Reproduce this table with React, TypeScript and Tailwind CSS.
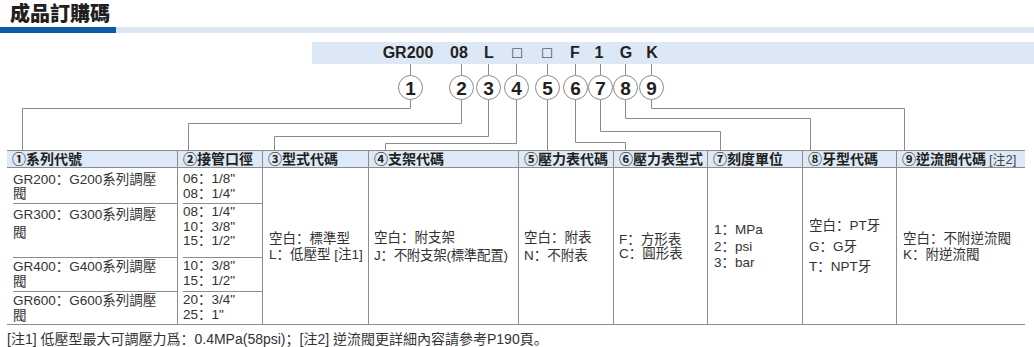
import React from "react";

const ticks = [410, 461, 488, 516, 547, 575, 600, 625, 651];

// connector lines, page coordinates (svg is shifted up by 33px)
const paths = [
  "M410.5 100 V108.5 H22.5 V150",
  "M461.5 100 V123.5 H188.5 V150",
  "M488.5 100 V136.5 H274.5 V150",
  "M516.5 100 V143.5 H385.5 V150",
  "M547.5 100 V150",
  "M575.5 100 V142.5 H625.5 V150",
  "M600.5 100 V131.5 H720.5 V150",
  "M625.5 100 V118.5 H810.5 V150",
  "M651.5 100 V108.5 H904.5 V150",
];

const codes: [string, number][] = [
  ["GR200", 408],
  ["08", 459],
  ["L", 489],
  ["□", 517],
  ["□", 547],
  ["F", 575],
  ["1", 599],
  ["G", 626],
  ["K", 652],
];

const heads = [
  "①系列代號",
  "②接管口徑",
  "③型式代碼",
  "④支架代碼",
  "⑤壓力表代碼",
  "⑥壓力表型式",
  "⑦刻度單位",
  "⑧牙型代碼",
];

// fullwidth punctuation sits low-left like the print, so take it from the SC face
function T({ s }: { s: string }) {
  const parts = s.split(/([：；。])/);
  return (
    <>
      {parts.map((p, i) =>
        /^[：；。]$/.test(p) ? (
          <span key={i} className="font-['Noto_Sans_CJK_SC',sans-serif]">
            {p}
          </span>
        ) : (
          <React.Fragment key={i}>{p}</React.Fragment>
        )
      )}
    </>
  );
}

function Diagram() {
  return (
    <div className="relative h-[117px] pt-[9px]">
      {/* code banner */}
      <div className="relative ml-[312px] h-[22px] bg-[#dce8f5]">
        {codes.map(([c, x], i) => (
          <span
            key={i}
            className="absolute top-0 -translate-x-1/2 text-[16px] font-bold leading-[22px] text-[#231f20]"
            style={{ left: x - 312 }}
          >
            {c}
          </span>
        ))}
      </div>
      <svg className="absolute left-0 top-0" width={1034} height={117}>
        <g transform="translate(0,-33)" stroke="#8a8a8a" strokeWidth={1} fill="none">
          {ticks.map((x) => (
            <path key={x} d={`M${x + 0.5} 64 V75.5`} />
          ))}
          {paths.map((d) => (
            <path key={d} d={d} />
          ))}
          {ticks.map((x, i) => (
            <g key={"c" + x}>
              <circle cx={x + 0.5} cy={87.5} r={12} fill="#fff" />
              <text
                x={x + 0.5}
                y={94.5}
                textAnchor="middle"
                fontSize={19}
                fontWeight={700}
                fill="#231f20"
                stroke="none"
              >
                {i + 1}
              </text>
            </g>
          ))}
        </g>
      </svg>
    </div>
  );
}

function Table() {
  const mid = "border-l border-[#8c8c8c] flex flex-col justify-center whitespace-nowrap";
  return (
    <div className="ml-[7px] grid w-[1018px] grid-cols-[170px_85px_106px_150px_95px_94px_95px_94px_129px] border-y border-[#8c8c8c] text-[13.5px] text-[#333]">
      {heads.map((h, i) => (
        <div
          key={h}
          className={
            "h-[17px] whitespace-nowrap border-b border-[#8c8c8c] bg-[#dde9f6] pl-[5px] text-[14px] font-bold leading-[16px] text-[#231f20] " +
            (i > 0 ? "border-l" : "")
          }
        >
          {h}
        </div>
      ))}
      <div className="h-[17px] whitespace-nowrap border-b border-l border-[#8c8c8c] bg-[#dde9f6] pl-[5px] text-[14px] leading-[16px] text-[#231f20]">
        <span className="font-bold">⑨逆流閥代碼</span>
        <span className="ml-[3px] text-[13px] text-[#444]">[注2]</span>
      </div>

      {/* ① series */}
      <div className="flex h-[156px] flex-col whitespace-nowrap pl-[6px]">
        <div className="h-[36px] border-b border-[#8c8c8c] pt-[3px] leading-[14px]">
          <T s="GR200：G200系列調壓" />
          <br />閥
        </div>
        <div className="h-[54px] border-b border-[#8c8c8c] leading-[18px]">
          <T s="GR300：G300系列調壓" />
          <br />閥
        </div>
        <div className="h-[34px] border-b border-[#8c8c8c] leading-[15px]">
          <T s="GR400：G400系列調壓" />
          <br />閥
        </div>
        <div className="h-[32px] leading-[15px]">
          <T s="GR600：G600系列調壓" />
          <br />閥
        </div>
      </div>

      {/* ② port size */}
      <div className="flex h-[156px] flex-col whitespace-nowrap border-l border-[#8c8c8c] pl-[5px] leading-[13.5px]">
        <div className="h-[36px] border-b border-[#8c8c8c] pt-[3px]">
          <T s={'06：1/8"'} />
          <br />
          <T s={'08：1/4"'} />
        </div>
        <div className="h-[54px] border-b border-[#8c8c8c]">
          <T s={'08：1/4"'} />
          <br />
          <T s={'10：3/8"'} />
          <br />
          <T s={'15：1/2"'} />
        </div>
        <div className="h-[34px] border-b border-[#8c8c8c]">
          <T s={'10：3/8"'} />
          <br />
          <T s={'15：1/2"'} />
        </div>
        <div className="h-[32px]">
          <T s={'20：3/4"'} />
          <br />
          <T s={'25：1"'} />
        </div>
      </div>

      <div className={mid + " pl-[6px] leading-[14px]"}>
        <div><T s="空白：標準型" /></div>
        <div><T s="L：低壓型 [注1]" /></div>
      </div>
      <div className={mid + " pl-[5px] leading-[17px]"}>
        <div><T s="空白：附支架" /></div>
        <div className="tracking-[-0.3px]"><T s="J：不附支架(標準配置)" /></div>
      </div>
      <div className={mid + " pl-[5px] leading-[17px]"}>
        <div><T s="空白：附表" /></div>
        <div><T s="N：不附表" /></div>
      </div>
      <div className={mid + " pl-[5px] leading-[13.5px]"}>
        <div><T s="F：方形表" /></div>
        <div><T s="C：圓形表" /></div>
      </div>
      <div className={mid + " pl-[6px] leading-[14.5px]"}>
        <div><T s="1：MPa" /></div>
        <div><T s="2：psi" /></div>
        <div><T s="3：bar" /></div>
      </div>
      <div className={mid + " pl-[6px] leading-[18.5px]"}>
        <div><T s="空白：PT牙" /></div>
        <div><T s="G：G牙" /></div>
        <div><T s="T：NPT牙" /></div>
      </div>
      <div className={mid + " pl-[6px] leading-[15px]"}>
        <div><T s="空白：不附逆流閥" /></div>
        <div><T s="K：附逆流閥" /></div>
      </div>
    </div>
  );
}

export default function App() {
  return (
    <div className="h-[347px] w-[1034px] overflow-hidden bg-white font-['Liberation_Sans','Noto_Sans_CJK_TC',sans-serif]">
      <div className="h-[27px] pl-[10px] pt-[2px] text-[20px] font-black leading-[24px] text-[#231f20]">
        成品訂購碼
      </div>
      <div className="flex h-[6px]">
        <div className="w-[116px] bg-[#0d5aa7]" />
        <div className="flex-1 bg-[#dbe7f4]" />
      </div>
      <Diagram />
      <Table />
      <div className="ml-[7px] mt-[4px] whitespace-nowrap text-[14px] leading-[18px] text-[#333]">
        <T s="[注1] 低壓型最大可調壓力爲：0.4MPa(58psi)；[注2] 逆流閥更詳細內容請參考P190頁。" />
      </div>
    </div>
  );
}
